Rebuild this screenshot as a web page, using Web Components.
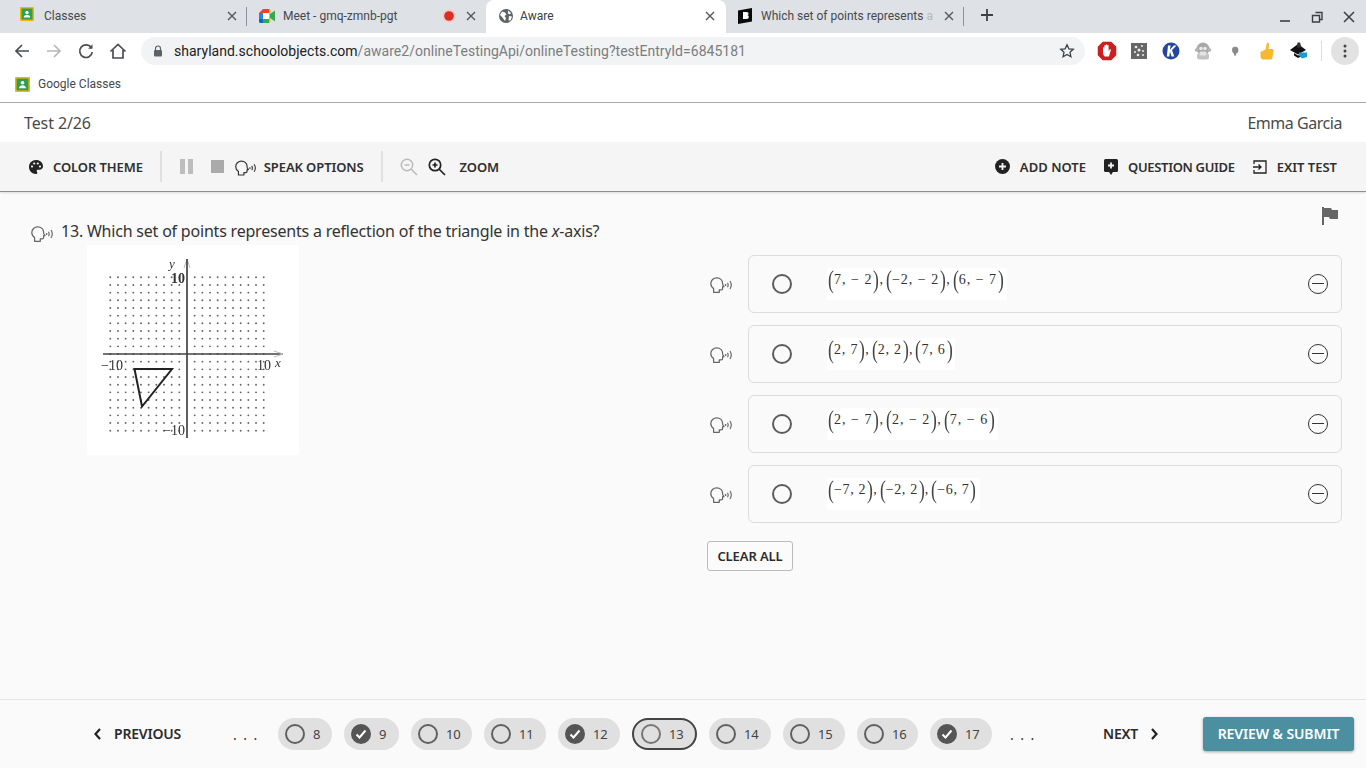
<!DOCTYPE html>
<html lang="en"><head><meta charset="utf-8"><title>Aware</title>
<style>
html,body{margin:0;padding:0;height:100%;overflow:hidden}
body{width:1366px;height:768px;display:flex;flex-direction:column;background:#fafafa;font-family:"Noto Sans","Open Sans",sans-serif}
svg{display:block}
</style></head><body>
<browser-chrome></browser-chrome>
<test-header><span slot="left" style="letter-spacing:-.1px">Test 2/26</span><span slot="right" style="letter-spacing:-.46px">Emma Garcia</span></test-header>
<test-toolbar></test-toolbar>
<question-area></question-area>
<test-footer></test-footer>
<script>
const I={
 speak:(w=23,h=16,c='#666')=>`<svg width="${w}" height="${h}" viewBox="0 0 23 16" fill="none" stroke="${c}"><path stroke-width="1.250" stroke-linejoin="round" d="M3.600 15.300V11.600C1.800 10.400.8 8.600.8 6.600.8 3.300 3.400.8 6.800.8c3.300 0 5.800 2.400 5.800 5.400 0 .7 0 1.100.2 1.500l1.200 2h-1.400v1.800c0 .8-.6 1.300-1.300 1.300H9.300v2.500z"/><path stroke-width="1.150" d="M17.500 5.800c.8 1.300.8 3.100 0 4.400M20 4c1.500 2.400 1.500 5.600 0 8"/><circle cx="15.600" cy="8" r=".9" fill="${c}" stroke="none"/></svg>`,
 classes:s=>`<svg width="${s}" height="${s}" viewBox="0 0 14 14"><rect width="14" height="14" rx="1" fill="#f4b400"/><rect x="1.5" y="1.5" width="11" height="11" fill="#2f9e55"/><circle cx="7" cy="5.4" r="1.7" fill="#fff"/><path d="M3.6 10.5c.3-2 1.8-2.8 3.4-2.8s3.1.8 3.4 2.8z" fill="#fff"/></svg>`
};
const def=(n,html,setup)=>customElements.define(n,class extends HTMLElement{constructor(){super();this.attachShadow({mode:'open'}).innerHTML=typeof html==='function'?html(this):html}connectedCallback(){setup&&setup(this)}});

def('chrome-tab',`<style>
:host{display:flex;align-items:center;box-sizing:border-box;flex:none;width:239px;height:33px;padding:0 7px 2px 12px;font:12px Roboto,sans-serif;color:#45494e;position:relative}
:host([active]){background:#fff;border-radius:8px 8px 0 0;width:240px;padding-left:13px;padding-right:8px;color:#3c4043}
:host([last]){width:238px}
.t{flex:1;margin-left:var(--g,10px);white-space:nowrap;overflow:hidden;min-width:0}
.x{width:16px;text-align:center;flex:none}
:host([sep])::after{content:"";position:absolute;right:0;top:7px;height:19px;width:1px;background:#8f9399}
</style><slot name="icon"></slot><span class="t"><slot></slot></span><slot name="rec"></slot><svg class="x" width="16" height="16" viewBox="0 0 16 16" stroke="#55595e" stroke-width="1.4"><path d="M4 4l8 8M12 4l-8 8"/></svg>`);

def('browser-chrome',`<style>
:host{display:block;flex:none;height:103px;background:#fff;border-bottom:1px solid #aaa;box-sizing:border-box}
.tabs{display:flex;height:33px;background:#dee1e6;padding-left:8px;align-items:flex-start}
.plus{margin-left:16px;margin-top:8px}
.win{margin-left:auto;display:flex;gap:16px;padding:9px 9px 0 0}
.bar{display:flex;align-items:center;height:38px;padding:0 0 2px 13px;box-sizing:border-box}
.nav{display:flex;gap:14px;align-items:center}
.url{display:flex;align-items:center;box-sizing:border-box;width:944px;height:28px;margin-left:14px;border-radius:14px;background:#f1f3f4;padding:0 10px 0 12px;font:14px Roboto,sans-serif;color:#7a7d81;letter-spacing:.02px}
.url b{font-weight:400;color:#202124}
.url span{margin-left:11px;flex:1}
.ext{display:flex;align-items:center;margin-left:12px;gap:12px}
.more{width:28px;height:28px;border-radius:50%;background:#e2e2e2;display:flex;align-items:center;justify-content:center}
.sep{width:1px;height:20px;background:#ddd}
.bm{display:flex;align-items:center;height:26px;padding:0 0 0 15px;box-sizing:border-box;font:12px Roboto,sans-serif;color:#45494e;gap:8px}
</style>
<div class="tabs">
<chrome-tab sep><span slot="icon">${I.classes(14)}</span>Classes</chrome-tab>
<chrome-tab style="--g:8px"><svg slot="icon" width="16" height="14" viewBox="0 0 16 14"><path d="M0 4l4-4h6v5H4v0H0z" fill="#ea4335"/><path d="M0 4h4v6H0z" fill="#1e88e5"/><path d="M0 10h4v4H1.500A1.500 1.500 0 0 1 0 12.500z" fill="#1565c0"/><path d="M4 9h6v5H4z" fill="#34a853"/><path d="M10 0v14l1.500-1V1z" fill="#fbbc04"/><path d="M11 5l5-3.500v11L11 9z" fill="#34a853"/><rect x="4" y="4" width="6" height="6" fill="#fff"/></svg><svg slot="rec" width="16" height="16" viewBox="0 0 16 16" style="margin-right:6px"><circle cx="8" cy="8" r="6.500" fill="#f6c9c5"/><circle cx="8" cy="8" r="4.800" fill="#d93025"/></svg>Meet - gmq-zmnb-pgt</chrome-tab>
<chrome-tab active style="--g:7px"><svg slot="icon" width="14" height="14" viewBox="0 0 14 14"><circle cx="7" cy="7" r="7" fill="#5f6368"/><path d="M3 2.500l3 1 1.500 2-2 1.500 1.500 2-1 3-3-4-2-2zM9 1.500l3 2.500-1 1.500-2-1zM10 7l3 .5-1.500 4-2 0z" fill="#fff"/></svg>Aware</chrome-tab>
<chrome-tab sep last style="--g:9px"><svg slot="icon" width="14" height="16" viewBox="0 0 14 16"><path d="M0 2.500L14 0v13.500L0 16z" fill="#0a0a0a"/><path d="M5 4h3.500c1.500 0 2 .8 2 1.700 0 .8-.5 1.300-1 1.500.8.200 1.300.8 1.300 1.700 0 1.200-.9 2-2.300 2H5z" fill="#fff"/></svg>Which set of points represents <span style="color:#b5b8bc">a</span></chrome-tab>
<svg class="plus" width="14" height="14" viewBox="0 0 14 14" stroke="#3c4043" stroke-width="1.800"><path d="M7 1v12M1 7h12"/></svg>
<div class="win"><svg width="16" height="16" viewBox="0 0 16 16" stroke="#3c4043" stroke-width="1.600"><path d="M3 12h10"/></svg><svg width="16" height="16" viewBox="0 0 16 16" fill="none" stroke="#3c4043" stroke-width="1.400"><path d="M6.500 3.500h6.500v7H11M3.500 6.500h7v6.500h-7z"/></svg><svg width="16" height="16" viewBox="0 0 16 16" stroke="#3c4043" stroke-width="1.500"><path d="M3 3l10 10M13 3L3 13"/></svg></div>
</div>
<div class="bar"><div class="nav">
<svg width="18" height="18" viewBox="0 0 18 18" fill="none" stroke="#4a4d51" stroke-width="1.700"><path d="M16 9H3M9 3L3 9l6 6"/></svg>
<svg width="18" height="18" viewBox="0 0 18 18" fill="none" stroke="#b4b6b9" stroke-width="1.700"><path d="M2 9h13M9 3l6 6-6 6"/></svg>
<svg width="18" height="18" viewBox="0 0 18 18" fill="none" stroke="#4a4d51" stroke-width="1.700"><path d="M14.500 6A6.300 6.300 0 1 0 15.300 10"/><path d="M15.500 2.300v4.400h-4.400z" fill="#4a4d51" stroke="none"/></svg>
<svg width="18" height="18" viewBox="0 0 18 18" fill="none" stroke="#4a4d51" stroke-width="1.700"><path d="M1.500 9.500L9 2.500l7.500 7M4 8v8h10V8"/></svg>
</div>
<div class="url"><svg width="10" height="12" viewBox="0 0 10 12"><path d="M2.500 5V3.500a2.500 2.500 0 0 1 5 0V5" fill="none" stroke="#5f6368" stroke-width="1.200"/><rect x="1" y="5" width="8" height="6.500" rx="1" fill="#5f6368"/></svg><span><b>sharyland.schoolobjects.com</b>/aware2/onlineTestingApi/onlineTesting?testEntryId=6845181</span><svg width="16" height="16" viewBox="0 0 16 16" fill="none" stroke="#3c4043" stroke-width="1.300"><path d="M8 1.800l1.900 4 4.400.5-3.300 3 .9 4.400L8 11.500l-3.900 2.200.9-4.400-3.300-3 4.400-.5z"/></svg></div>
<div class="ext">
<svg width="20" height="20" viewBox="0 0 20 20"><path d="M6 1.500h8l4.500 4.500v8L14 18.500H6L1.500 14V6z" fill="#cc1f1f" stroke="#cc1f1f" stroke-linejoin="round" stroke-width="1.500"/><path d="M6 11V7c0-1 1.400-1 1.400 0V4.800c0-1 1.400-1 1.400 0V4c0-1 1.400-1 1.400 0v.8c0-1 1.400-1 1.400 0V10l1-1.300c.7-.8 1.700 0 1.100.9L12 15.500H8c-1.200 0-2-2.500-2-4.500z" fill="#fff"/></svg>
<svg width="20" height="20" viewBox="0 0 20 20"><rect x="2" y="2" width="16" height="16" fill="#666"/><g fill="#eee"><circle cx="7" cy="6" r="1.300"/><circle cx="13" cy="5" r="1"/><circle cx="10" cy="9" r="1.500"/><circle cx="14" cy="10" r="1"/><circle cx="6" cy="11" r="1"/><circle cx="9" cy="14" r="1.300"/><circle cx="14" cy="14" r="1"/></g></svg>
<svg width="20" height="20" viewBox="0 0 20 20"><circle cx="10" cy="10" r="8.500" fill="#26469c"/><path d="M7 4.500h2.600L9 8.800l3.800-4.300h2.700L11 9.300 13.300 15.500h-2.700L9 10.800 8.300 15.500H5.800z" fill="#fff"/></svg>
<svg width="20" height="20" viewBox="0 0 20 20"><circle cx="10" cy="8" r="6.500" fill="#a9a9a9"/><circle cx="3.500" cy="9" r="1.800" fill="#b5b5b5"/><circle cx="16.500" cy="9" r="1.800" fill="#b5b5b5"/><rect x="4" y="12" width="12" height="6.500" rx="2.500" fill="#c2c2c2"/><circle cx="8" cy="7.500" r="1.800" fill="#e8e8e8"/><circle cx="12" cy="7.500" r="1.800" fill="#e8e8e8"/><rect x="6.500" y="10.500" width="7" height="4" rx="1.500" fill="#e4e4e4"/></svg>
<svg width="20" height="20" viewBox="0 0 20 20"><path d="M7 9a3.200 3.200 0 0 1 6.400 0c0 2-1 3.500-2.300 3.500v2H9v-2C8 12 7 11 7 9z" fill="#8a8a8a"/></svg>
<svg width="20" height="20" viewBox="0 0 20 20"><path d="M3.500 11l5-2.500L10 1.500c1.500 0 2.300 1.300 2 2.800L11.500 8H15c1.200 0 1.700 1 1.400 2l-1 7c-.3 1-1 1.500-2 1.500H6c-1.700 0-2.500-1.500-2.500-3z" fill="#f5b82e"/></svg>
<svg width="20" height="20" viewBox="0 0 20 20"><path d="M1 9l8-6 8 6-8 4.500z" fill="#111"/><path d="M5 12l4 2.500 3-1.500v2.500L9 17l-4-2.500z" fill="#111"/><path d="M10 11.500h8V16l-5 1.500-3-3z" fill="#1a9bd7"/><path d="M8.500 1.500h2.500l1.500 5h-4.500z" fill="#333"/></svg>
<span class="sep" style="margin-left:0"></span>
<span class="more" style="margin-left:-3px"><svg width="4" height="16" viewBox="0 0 4 16" fill="#444"><circle cx="2" cy="3" r="1.500"/><circle cx="2" cy="8" r="1.500"/><circle cx="2" cy="13" r="1.500"/></svg></span>
</div></div>
<div class="bm">${I.classes(15)}<span>Google Classes</span></div>`);

def('test-header',`<style>:host{display:flex;flex:none;justify-content:space-between;align-items:center;box-sizing:border-box;height:39px;padding:0 24px;background:#fff;font:16px "Noto Sans",sans-serif;color:#4a4a4a}</style><slot name="left"></slot><slot name="right"></slot>`);

def('tool-item',`<style>:host{display:flex;align-items:center;gap:10px;font:600 13px "Noto Sans",sans-serif;color:#2f2f2f;white-space:nowrap;letter-spacing:-.1px}</style><slot name="icon"></slot><slot></slot>`);

def('test-toolbar',`<style>
:host{display:flex;flex:none;align-items:center;box-sizing:border-box;height:50px;background:#f5f5f5;border-bottom:1px solid #8e8e8e;box-shadow:0 1px 2px rgba(0,0,0,.12);padding:0 29px 0 29px;position:relative}
.d{width:2px;height:31px;background:#e0e0e0}
.sp{flex:1}
</style>
<tool-item><svg slot="icon" width="14" height="14" viewBox="0 0 14 14"><path d="M7 0C3 0 0 3 0 7s3 7 7 7c.8 0 1.300-.6 1.300-1.300 0-.8-.6-1-.6-1.700 0-.8.600-1.300 1.300-1.300h1.500C12.500 9.700 14 8.200 14 6.200 14 2.700 10.900 0 7 0z" fill="#222"/><g fill="#f5f5f5"><circle cx="3" cy="6.500" r="1.100"/><circle cx="5.200" cy="3.500" r="1.100"/><circle cx="8.800" cy="3.500" r="1.100"/><circle cx="11" cy="6.500" r="1.100"/></g></svg>COLOR THEME</tool-item>
<span class="d" style="margin-left:17px"></span>
<svg style="margin-left:18px" width="13" height="15" viewBox="0 0 13 15" fill="#bdbdbd"><rect width="5" height="15"/><rect x="8" width="5" height="15"/></svg>
<svg style="margin-left:18px" width="13" height="13" viewBox="0 0 13 13" fill="#aaa"><rect width="13" height="13"/></svg>
<tool-item style="margin-left:11px;gap:7px"><span slot="icon" style="display:flex;margin-top:2px">${I.speak(22,16,'#333')}</span>SPEAK OPTIONS</tool-item>
<span class="d" style="margin-left:17px"></span>
<svg style="margin-left:17px" width="18" height="18" viewBox="0 0 18 18" fill="none" stroke="#bbb" stroke-width="1.500"><circle cx="7" cy="7" r="5.700"/><path d="M4.500 7h5M11 11l6 6"/></svg>
<svg style="margin-left:10px" width="18" height="18" viewBox="0 0 18 18" fill="none" stroke="#222" stroke-width="1.700"><circle cx="7" cy="7" r="5.700"/><path d="M4.500 7h5M7 4.500v5M11 11l6 6"/></svg>
<tool-item style="margin-left:14px">ZOOM</tool-item>
<span class="sp"></span>
<tool-item style="letter-spacing:.03px"><svg slot="icon" width="15" height="15" viewBox="0 0 15 15"><circle cx="7.500" cy="7.500" r="7.500" fill="#222"/><path d="M7.500 4v7M4 7.500h7" stroke="#f5f5f5" stroke-width="1.800"/></svg>ADD NOTE</tool-item>
<tool-item style="margin-left:18px;letter-spacing:-.33px"><svg slot="icon" width="14" height="16" viewBox="0 0 14 16"><path d="M1.500 0h11A1.500 1.500 0 0 1 14 1.500v10a1.500 1.500 0 0 1-1.500 1.500H9l-2 3-2-3H1.500A1.500 1.500 0 0 1 0 11.500v-10A1.500 1.500 0 0 1 1.500 0z" fill="#222"/><path d="M7 3.500v6M4 6.500h6" stroke="#f5f5f5" stroke-width="1.800"/></svg>QUESTION GUIDE</tool-item>
<tool-item style="margin-left:18px;letter-spacing:0"><svg slot="icon" width="14" height="14" viewBox="0 0 14 14" fill="none" stroke="#222" stroke-width="1.300"><path d="M1 4V1h12v12H1v-3M0 7h8M5.500 4.500L8 7l-2.500 2.500"/></svg>EXIT TEST</tool-item>`);

def('math-expr',`<style>
:host{display:block;box-sizing:border-box;background:#fff;height:32px;font:14px "Liberation Serif",serif;color:#333;white-space:pre;letter-spacing:2px}
.r{display:flex;align-items:center;height:24px}
</style><div class="r"><slot></slot></div>`);
def('math-g',`<style>
:host{display:inline-flex;align-items:center;letter-spacing:var(--ls,1px)}
i{font:300 25px/24px "Liberation Serif",serif;display:inline-block;width:7px;text-align:center;transform:scaleX(.7);color:#444;letter-spacing:0}
</style><i>(</i><slot></slot><i>)</i>`);

def('answer-option',`<style>
:host{display:flex;align-items:center;height:58px}
.s{width:41px;flex:none;padding:2px 0 0 3px;box-sizing:border-box;display:flex}
.c{flex:1;height:58px;box-sizing:border-box;border:1px solid #dcdcdc;border-radius:6px;background:#fafafa;display:flex;align-items:center}
.rd{width:20px;height:20px;box-sizing:border-box;border:2px solid #5c5c5c;border-radius:50%;margin-left:23px;flex:none}
.m{margin-left:35px;width:var(--w);flex:none}
.el{margin:-1px 13px 0 auto;width:20px;height:20px;box-sizing:border-box;border:1.600px solid #333;border-radius:50%;display:flex;align-items:center;justify-content:center}
.el::after{content:"";width:12px;height:1.600px;background:#333}
</style><div class="s">${I.speak(23,16)}</div><div class="c"><span class="rd"></span><div class="m"><slot></slot></div><span class="el"></span></div>`);

def('dot-graph',`<style>:host{display:block;width:212px;height:210px;background:#fff}svg{filter:blur(.35px)}</style><svg id="g" width="212" height="210" viewBox="0 0 212 210"></svg>`,
 el=>{const u=7.67,ox=100,oy=109;let s='<g fill="#666">';
 for(let i=-10;i<=10;i++)for(let j=-10;j<=10;j++){if(i==0)continue;s+=`<circle cx="${ox+i*u}" cy="${oy+j*u}" r=".95"/>`}
 s+=`</g><path d="M16 ${oy}H196" stroke="#444" stroke-width="1.500"/><path d="M196 ${oy}l-9-3M196 ${oy}l-9 3M${ox} 14l-3 9M${ox} 14l3 9" stroke="#bbb" fill="none"/><path d="M${ox} 14V193" stroke="#444" stroke-width="1.700"/>
 <path d="M47.500 124H85L55 161.500z" fill="none" stroke="#222" stroke-width="2"/>
 <g font-family="Liberation Serif,serif" fill="#333"><text x="85" y="23" text-anchor="middle" font-style="italic" font-size="13">y</text><text x="91" y="38" text-anchor="middle" font-size="14" font-weight="700">10</text><text x="14" y="125" font-size="14">−10</text><text x="170" y="125" font-size="14">10</text><text x="188" y="122" font-style="italic" font-size="13">x</text><text x="76" y="190" font-size="14">−10</text></g>`;
 el.shadowRoot.getElementById('g').innerHTML=s});

def('question-area',`<style>
:host{flex:1;display:flex;min-height:0;position:relative;box-sizing:border-box;padding:0 24px 0 0}
.l{width:707px;flex:none;padding-top:30px;box-sizing:border-box}
.q{display:flex;align-items:flex-start;height:18px;padding-left:31px;gap:7px;font:16px/18px "Noto Sans",sans-serif;color:#333;letter-spacing:-.205px;white-space:nowrap}
.q .ic{display:flex;margin-top:4px}
.g{margin:5px 0 0 87px}
.r{flex:1;padding-top:63px;display:flex;flex-direction:column;gap:12px}
.flag{position:absolute;right:28px;top:15px}
button{all:unset;box-sizing:border-box;width:86px;height:30px;border:1px solid #bbb;border-radius:3px;background:#fbfbfb;text-align:center;font:600 13px/28px "Noto Sans",sans-serif;color:#2b2b2b;margin-top:6px;letter-spacing:-.1px}
i{font-style:italic}
</style>
<div class="l"><div class="q"><span class="ic">${I.speak(23,16)}</span><span>13. Which set of points represents a reflection of the triangle in the <i>x</i>-axis?</span></div><div class="g"><dot-graph></dot-graph></div></div>
<div class="r">
<answer-option style="--w:180px"><math-expr><math-g>7, − 2</math-g>,<math-g>−2, − 2</math-g>,<math-g>6, − 7</math-g></math-expr></answer-option>
<answer-option style="--w:128px;--ls:.8px"><math-expr><math-g>2, 7</math-g>,<math-g>2, 2</math-g>,<math-g>7, 6</math-g></math-expr></answer-option>
<answer-option style="--w:171px"><math-expr><math-g>2, − 7</math-g>,<math-g>2, − 2</math-g>,<math-g>7, − 6</math-g></math-expr></answer-option>
<answer-option style="--w:153px;--ls:.65px"><math-expr><math-g>−7, 2</math-g>,<math-g>−2, 2</math-g>,<math-g>−6, 7</math-g></math-expr></answer-option>
<div><button>CLEAR ALL</button></div>
</div>
<svg class="flag" width="16" height="18" viewBox="0 0 16 18"><path d="M0 0h2v18H0z" fill="#666"/><path d="M2 1h7l1 2h6v9H8l-1-2H2z" fill="#666"/></svg>`);

def('q-pill',`<style>
:host{display:flex;align-items:center;box-sizing:border-box;flex:none;height:32px;width:62px;padding-left:7px;gap:8px;border-radius:16px;background:#e0e0e0;font:13px "Noto Sans",sans-serif;color:#444}
:host([n="1"]){width:54px}:host([n="1c"]){width:55px}:host([n="s"]){width:61px}
:host([cur]){width:65px;border:2px solid #444;padding-left:7px}
.o{width:20px;height:20px;border-radius:50%;box-sizing:border-box;border:2px solid #606060;flex:none;display:flex;align-items:center;justify-content:center}
:host([cur]) .o{border-color:#777}
:host([done]) .o{background:#555;border:none}
svg{display:none}:host([done]) svg{display:block}
</style><span class="o"><svg width="14" height="14" viewBox="0 0 14 14" fill="none" stroke="#fff" stroke-width="2"><path d="M2.500 7.500l3 3 6-7"/></svg></span><slot></slot>`);

def('test-footer',`<style>
:host{display:flex;flex:none;align-items:center;box-sizing:border-box;height:69px;border-top:1px solid #e6e6e6;background:#fafafa;font:600 14px "Noto Sans",sans-serif;color:#2b2b2b;padding:0 12px 0 93px;letter-spacing:-.2px}
.nv{display:flex;align-items:center;gap:12px;margin-top:-1px}
.dots{flex:none;width:23px;white-space:nowrap;letter-spacing:1.400px;font-weight:400;font-size:14px;color:#333}
.pills{display:flex;gap:12px;margin-left:22px;flex:none}
.sub{margin-left:auto;width:151px;height:34px;background:#4b8fa1;color:#fff;border-radius:3px;box-shadow:0 1px 3px rgba(0,0,0,.35);display:flex;align-items:center;justify-content:center;font-size:14px;letter-spacing:-.1px;margin-top:-1px}
</style>
<div class="nv"><svg width="9" height="12" viewBox="0 0 9 12" fill="none" stroke="#222" stroke-width="2.200"><path d="M7 1L2.500 6 7 11"/></svg>PREVIOUS</div>
<span class="dots" style="margin-left:52px">. . .</span>
<div class="pills"><q-pill n="1">8</q-pill><q-pill n="1c" done>9</q-pill><q-pill n="s">10</q-pill><q-pill>11</q-pill><q-pill done>12</q-pill><q-pill cur>13</q-pill><q-pill>14</q-pill><q-pill>15</q-pill><q-pill n="s">16</q-pill><q-pill done>17</q-pill></div>
<span class="dots" style="margin-left:18px">. . .</span>
<div class="nv" style="margin-left:70px">NEXT<svg width="9" height="12" viewBox="0 0 9 12" fill="none" stroke="#222" stroke-width="2.200"><path d="M2 1l4.500 5L2 11"/></svg></div>
<div class="sub">REVIEW &amp; SUBMIT</div>`);
</script>
</body></html>
